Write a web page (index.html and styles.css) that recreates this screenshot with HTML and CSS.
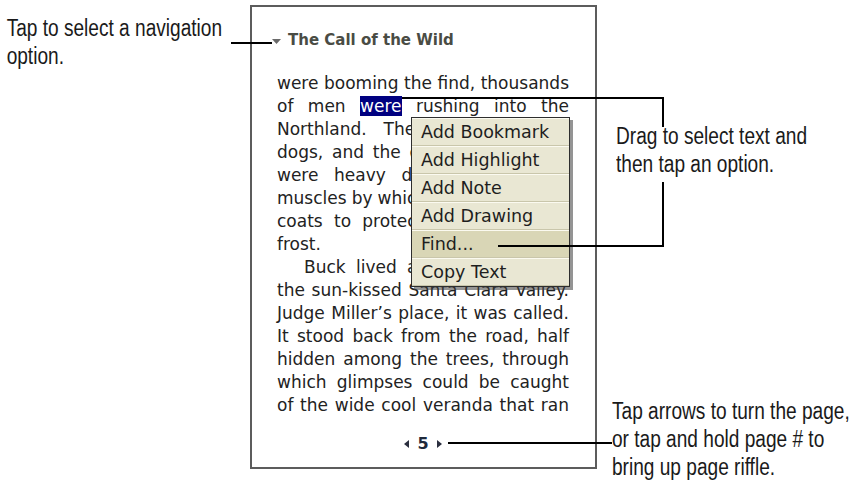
FILE: index.html
```html
<!DOCTYPE html>
<html lang="en">
<head>
    <meta charset="UTF-8">
    <meta name="viewport" content="width=device-width, initial-scale=1.0">
    <title>The Call of the Wild - Reader</title>
    <link rel="stylesheet" href="styles.css">
</head>
<body>
    <div class="sheet">
        <!-- Callout on the left -->
        <div class="side-left">
            <p class="note note-nav">Tap to select a navigation<br>option.</p>
        </div>

        <!-- The reader screen -->
        <div class="device">
            <div class="book-title">
                <svg class="caret" width="9" height="5" viewBox="0 0 9 5"><polygon points="0,0 9,0 4.5,5"/></svg>
                <span>The Call of the Wild</span>
            </div>

            <div class="page-text">
                <span class="ln">were booming the find, thousands</span>
                <span class="ln">of men <span class="sel">were</span> rushing into the</span>
                <span class="ln">Northland. These men wanted</span>
                <span class="ln">dogs, and the dogs they wanted</span>
                <span class="ln">were heavy dogs, with strong</span>
                <span class="ln tight">muscles by which to toil, and furry</span>
                <span class="ln">coats to protect them from the</span>
                <span class="ln end">frost.</span>
                <span class="ln indent">Buck lived at a big house in</span>
                <span class="ln">the sun-kissed Santa Clara Valley.</span>
                <span class="ln">Judge Miller’s place, it was called.</span>
                <span class="ln">It stood back from the road, half</span>
                <span class="ln">hidden among the trees, through</span>
                <span class="ln">which glimpses could be caught</span>
                <span class="ln">of the wide cool veranda that ran</span>
            </div>

            <div class="pager">
                <svg width="5" height="8" viewBox="0 0 5 8"><polygon points="5,0 5,8 0,4"/></svg>
                <span class="page-num">5</span>
                <svg width="5" height="8" viewBox="0 0 5 8"><polygon points="0,0 0,8 5,4"/></svg>
            </div>

            <!-- Popup shown after selecting text -->
            <ul class="menu">
                <li>Add Bookmark</li>
                <li>Add Highlight</li>
                <li>Add Note</li>
                <li>Add Drawing</li>
                <li class="hot">Find...</li>
                <li>Copy Text</li>
            </ul>
        </div>

        <!-- Callouts on the right -->
        <div class="side-right">
            <p class="note note-select">Drag to select text and<br>then tap an option.</p>
            <p class="note note-pager">Tap arrows to turn the page,<br>or tap and hold page # to<br>bring up page riffle.</p>
        </div>

        <!-- Leader lines -->
        <svg class="leaders" width="861" height="483" viewBox="0 0 861 483">
            <rect x="231" y="42" width="41" height="2"/>
            <rect x="402" y="97" width="262" height="2"/>
            <rect x="662" y="97" width="2" height="30"/>
            <rect x="662" y="182" width="2" height="65"/>
            <rect x="498" y="245" width="166" height="2"/>
            <rect x="448" y="442" width="164" height="2"/>
        </svg>
    </div>
</body>
</html>
```

FILE: styles.css
```css
body {
    margin: 0;
    background-color: #fff;
}

.sheet {
    position: relative;
    display: flex;
    width: 861px;
    height: 483px;
    overflow: hidden;
}

.side-left {
    width: 250px;
    flex-shrink: 0;
}

.side-right {
    flex: 1;
}

/* callout captions, condensed look */
.note {
    margin: 0;
    font-family: "Liberation Sans", Arial, sans-serif;
    font-size: 23px;
    line-height: 28px;
    color: #1a1a1a;
    white-space: nowrap;
    transform: scaleX(0.83);
    transform-origin: 0 0;
}

.note-nav {
    padding: 14px 0 0 8px;
}

.note-select {
    margin: 122px 0 0 19px;
}

.note-pager {
    margin: 219px 0 0 15px;
}

/* reader screen */
.device {
    position: relative;
    flex-shrink: 0;
    box-sizing: border-box;
    width: 347px;
    height: 464px;
    margin-top: 5px;
    padding: 23px 26px 0 25px;
    border: 2px solid #5c5c5c;
    font-family: "DejaVu Sans", sans-serif;
    color: #222;
}

.book-title {
    display: flex;
    align-items: center;
    gap: 7px;
    margin-left: -5px;
    font-size: 15px;
    font-weight: bold;
    line-height: 20px;
    color: #4a4c44;
}

.caret {
    margin-top: 2px;
    fill: #6a6a6a;
}

.page-text {
    margin-top: 22px;
    font-size: 17px;
    line-height: 23px;
}

.ln {
    display: block;
    text-align: justify;
    text-align-last: justify;
}

.ln.end {
    text-align-last: left;
}

.ln.indent {
    text-indent: 27px;
}

.ln.tight {
    word-spacing: -1px;
}

.sel {
    background-color: #000080;
    color: #fff;
}

.pager {
    display: flex;
    justify-content: center;
    align-items: center;
    gap: 8px;
    margin-top: 17px;
    font-size: 16px;
    font-weight: bold;
    line-height: 20px;
    color: #1f2a3c;
}

.pager svg {
    fill: #2b2f3f;
}

/* popup menu */
.menu {
    position: absolute;
    left: 159px;
    top: 110px;
    width: 159px;
    box-sizing: border-box;
    margin: 0;
    padding: 0;
    list-style: none;
    background-color: #e9e7d3;
    border: 1px solid #2e2e2e;
    box-shadow: 3px 3px 0 rgba(60, 60, 60, 0.55);
    font-family: "DejaVu Sans", sans-serif;
    font-size: 17.5px;
    line-height: 26px;
    color: #1e1e1e;
}

.menu li {
    padding-left: 9px;
    border-top: 1px solid #fbfaf0;
    border-bottom: 1px solid #c9c6ab;
    white-space: nowrap;
}

.menu li.hot {
    background-color: #d9d6b6;
}

.leaders {
    position: absolute;
    top: 0;
    left: 0;
    pointer-events: none;
    fill: #000;
}
```
